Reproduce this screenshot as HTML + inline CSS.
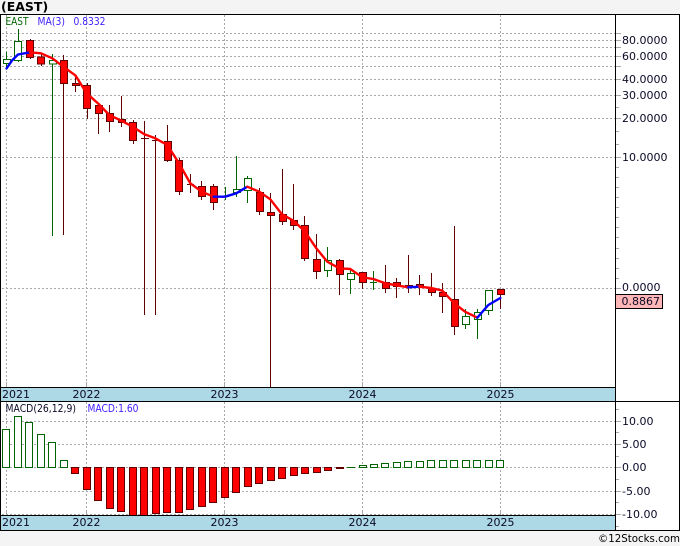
<!DOCTYPE html>
<html><head><meta charset="utf-8"><style>
html,body{margin:0;padding:0;background:#f4f4f4}
svg{display:block}
text{font-family:"DejaVu Sans",sans-serif;font-size:11px;fill:#0a0a28}
.c{shape-rendering:crispEdges}
.r rect{fill:#f00;stroke:#600000}.g rect{fill:#fff;stroke:#006400}
.r path{stroke:#600000;fill:none}.g path{stroke:#006400;fill:none}
</style></head><body>
<svg width="680" height="546" viewBox="0 0 680 546" xmlns="http://www.w3.org/2000/svg">
<rect width="680" height="546" fill="#f4f4f4"/>
<rect x="0" y="14" width="680" height="516" fill="#fff"/>
<g class="c" stroke="#a8a8a8" stroke-dasharray="2 2" fill="none">
<path d="M2 33.5H616M2 40.5H616M2 47.5H616M2 56.5H616M2 66.5H616M2 79.5H616M2 95.5H616M2 118.5H616M2 157.5H616M2 288.5H616"/>
<path d="M2 421.5H616M2 444.5H616M2 467.5H616M2 491.5H616M2 514.5H616"/>
<path d="M6.5 15V387M86.5 15V387M224.5 15V387M362.5 15V387M500.5 15V387M6.5 402V515M86.5 402V515M224.5 402V515M362.5 402V515M500.5 402V515"/>
</g>
<g class="c" stroke="#a8a8a8" fill="none">
<path d="M6.5 382V387M86.5 382V387M224.5 382V387M362.5 382V387M500.5 382V387M6.5 510V515M86.5 510V515M224.5 510V515M362.5 510V515M500.5 510V515"/>
<path d="M616 33.5H621M616 40.5H621M616 47.5H621M616 56.5H621M616 66.5H621M616 79.5H621M616 95.5H621M616 118.5H621M616 157.5H621M616 288.5H621"/>
<path d="M616 107.5H619M616 131.5H619M616 144.5H619M616 167.5H619M616 177.5H619M616 187.5H619M616 197.5H619M616 207.5H619M616 217.5H619M616 227.5H619M616 237.5H619M616 248.5H619M616 258.5H619M616 268.5H619M616 278.5H619"/>
<path d="M616 409.5H619M616 432.5H619M616 456.5H619M616 479.5H619M616 502.5H619M616 526.5H619"/>
<path d="M616 421.5H621M616 444.5H621M616 467.5H621M616 491.5H621M616 514.5H621"/>
</g>
<rect class="c" x="1" y="388" width="614" height="13" fill="#add8e6"/>
<rect class="c" x="1" y="516" width="614" height="14" fill="#add8e6"/>

<g class="c">
<g class="g">
<path d="M6.5 52V68"/><rect x="3.5" y="59.5" width="7" height="4"/>
<path d="M18.5 29V62"/><rect x="14.5" y="41.5" width="7" height="19"/>
<path d="M52.5 54V236"/><rect x="49.5" y="60.5" width="7" height="3.5"/>
<path d="M225.5 187V200M221 196.5H229"/>
<path d="M236.5 156V197"/><rect x="233.5" y="189.5" width="7" height="3"/>
<path d="M247.5 176V203"/><rect x="244.5" y="178.5" width="7" height="12"/>
<path d="M327.5 247V277"/><rect x="324.5" y="260.5" width="7" height="10"/>
<path d="M350.5 270V294"/><rect x="347.5" y="273.5" width="7" height="6"/>
<path d="M373.5 271V290M370 282.5H377"/>
<path d="M465.5 309V329"/><rect x="462.5" y="316.5" width="7" height="8"/>
<path d="M477.5 309V339"/><rect x="474.5" y="312.5" width="7" height="7"/>
<path d="M488.5 290V315"/><rect x="485.5" y="290.5" width="7" height="20"/>
</g>
<g class="r">
<path d="M30.5 39V59"/><rect x="26.5" y="40.5" width="7" height="17"/>
<path d="M41.5 54V66"/><rect x="37.5" y="57" width="7" height="7"/>
<path d="M63.5 55V235"/><rect x="60.5" y="60.5" width="7" height="23"/>
<path d="M75.5 75V92"/><rect x="72.5" y="83.5" width="7" height="2"/>
<path d="M87.5 83V119"/><rect x="83.5" y="85.5" width="7" height="23"/>
<path d="M98.5 105V134"/><rect x="95.5" y="105.5" width="7" height="8"/>
<path d="M109.5 105V132"/><rect x="106.5" y="113.5" width="7" height="8"/>
<path d="M121.5 96V127"/><rect x="118.5" y="119.5" width="7" height="3"/>
<path d="M133.5 120V144"/><rect x="129.5" y="122.5" width="7" height="18"/>
<path d="M144.5 121V315M141 138.5H149"/>
<path d="M155.5 135V315M152 140.5H159"/>
<path d="M167.5 125V162"/><rect x="164.5" y="141.5" width="7" height="19"/>
<path d="M179.5 158V195"/><rect x="175.5" y="160.5" width="7" height="31"/>
<path d="M190.5 174V193M187 184.5H194"/>
<path d="M201.5 181V200"/><rect x="198.5" y="186.5" width="7" height="10"/>
<path d="M213.5 184V210"/><rect x="210.5" y="186.5" width="7" height="16"/>
<path d="M259.5 188V215"/><rect x="256.5" y="192.5" width="7" height="19"/>
<path d="M270.5 193V387"/><rect x="267.5" y="212.5" width="7" height="3"/>
<path d="M282.5 169V225"/><rect x="279.5" y="214.5" width="7" height="7"/>
<path d="M293.5 184V230"/><rect x="290.5" y="220.5" width="7" height="5"/>
<path d="M304.5 216V261"/><rect x="301.5" y="225.5" width="7" height="33"/>
<path d="M316.5 234V279"/><rect x="313.5" y="259.5" width="7" height="12"/>
<path d="M339.5 259V295"/><rect x="336.5" y="260.5" width="7" height="14"/>
<path d="M362.5 272V289"/><rect x="359.5" y="272.5" width="7" height="10"/>
<path d="M385.5 265V293"/><rect x="382.5" y="282.5" width="7" height="6"/>
<path d="M396.5 278V298"/><rect x="393.5" y="282.5" width="7" height="4"/>
<path d="M408.5 255V293"/><rect x="405.5" y="285.5" width="7" height="2"/>
<path d="M419.5 275V295"/><rect x="416.5" y="284.5" width="7" height="2"/>
<path d="M431.5 273V296"/><rect x="428.5" y="288.5" width="7" height="4"/>
<path d="M442.5 283V313"/><rect x="439.5" y="292.5" width="7" height="4"/>
<path d="M454.5 226V335"/><rect x="451.5" y="299.5" width="7" height="27"/>
<path d="M500.5 289V309"/><rect x="497.5" y="289.5" width="7" height="5"/>
</g>
</g>

<g fill="none" stroke-width="2.4" stroke-linejoin="round" stroke-linecap="round">
<polyline stroke="#00f" points="6.5,68.5 12,60.5 18,54.5 30,52.3"/>
<polyline stroke="#f00" points="30,52.3 41,53.3 52.3,58.3 63.3,66.7 75.3,75.3 86.7,93.3 98.7,104 109.3,115 121.3,120.7 132.7,126.7 144.3,134.3 155.3,138.3 167.3,145 179,163.3 190.3,183.3 201.7,191.7 213.7,196.7"/>
<polyline stroke="#00f" points="213.7,196.7 225,196.7 236.3,193.3 247.3,186.7"/>
<polyline stroke="#f00" points="247.3,186.7 259.3,191.7 270.3,199.3 281.7,214 293.3,220.7 304.3,230.7 316.3,248.3 327.3,261.7 339.3,268.3 350.3,269 362.3,277.3 373.3,279 385.3,283.3 396.3,285.3 408.3,287.3"/>
<polyline stroke="#00f" points="408.3,287.3 419.3,286.7"/>
<polyline stroke="#f00" points="419.3,286.7 431.3,288 442.3,290.7 454.3,303.3 465,311.7 477.3,317.7"/>
<polyline stroke="#00f" points="477.3,317.7 488.3,305 500.3,298"/>
</g>

<g class="c">
<g class="g">
<rect x="2.5" y="429.5" width="7" height="38"/><rect x="14.5" y="416.5" width="7" height="51"/><rect x="25.5" y="422.5" width="7" height="45"/><rect x="37.5" y="434.5" width="7" height="33"/><rect x="48.5" y="442.5" width="7" height="25"/><rect x="60.5" y="460.5" width="7" height="7"/>
<path d="M347 467.5H355"/>
<rect x="359.5" y="465.5" width="7" height="2"/><rect x="370.5" y="464.5" width="7" height="3"/><rect x="381.5" y="463.5" width="7" height="4"/><rect x="393.5" y="462.5" width="7" height="5"/><rect x="404.5" y="461.5" width="7" height="6"/><rect x="416.5" y="461.5" width="7" height="6"/><rect x="427.5" y="460.5" width="7" height="7"/><rect x="439.5" y="460.5" width="7" height="7"/><rect x="450.5" y="460.5" width="7" height="7"/><rect x="462.5" y="460.5" width="7" height="7"/><rect x="473.5" y="460.5" width="7" height="7"/><rect x="485.5" y="460.5" width="7" height="7"/><rect x="496.5" y="460.5" width="7" height="7"/>
</g>
<g class="r">
<rect x="71.5" y="467.5" width="7" height="6"/><rect x="83.5" y="467.5" width="7" height="22"/><rect x="94.5" y="467.5" width="7" height="33"/><rect x="106.5" y="467.5" width="7" height="41"/><rect x="117.5" y="467.5" width="7" height="44"/><rect x="129.5" y="467.5" width="7" height="48"/><rect x="140.5" y="467.5" width="7" height="48"/><rect x="152.5" y="467.5" width="7" height="46"/><rect x="163.5" y="467.5" width="7" height="45"/><rect x="175.5" y="467.5" width="7" height="45"/><rect x="186.5" y="467.5" width="7" height="42"/><rect x="198.5" y="467.5" width="7" height="39"/><rect x="209.5" y="467.5" width="7" height="35"/><rect x="221.5" y="467.5" width="7" height="30"/><rect x="232.5" y="467.5" width="7" height="25"/><rect x="244.5" y="467.5" width="7" height="19"/><rect x="255.5" y="467.5" width="7" height="16"/><rect x="267.5" y="467.5" width="7" height="13"/><rect x="278.5" y="467.5" width="7" height="11"/><rect x="290.5" y="467.5" width="7" height="8"/><rect x="301.5" y="467.5" width="7" height="6"/><rect x="313.5" y="467.5" width="7" height="5"/><rect x="324.5" y="467.5" width="7" height="3"/><rect x="336.5" y="467.5" width="7" height="1"/>
</g>
</g>

<g class="c" fill="#000">
<rect x="0" y="14" width="680" height="1"/>
<rect x="0" y="14" width="1" height="516"/>
<rect x="615" y="14" width="1" height="516"/>
<rect x="679" y="14" width="1" height="516"/>
<rect x="0" y="387" width="616" height="1"/>
<rect x="0" y="401" width="680" height="1"/>
<rect x="0" y="515" width="616" height="1"/>
<rect x="0" y="530" width="680" height="1"/>
</g>

<rect class="c" x="615.5" y="294.5" width="47" height="14" fill="#ffb6b6" stroke="#000"/>

<text x="1" y="11" style="font-weight:bold;font-size:12.5px;fill:#000">(EAST)</text>
<text x="5.5" y="25" textLength="23" lengthAdjust="spacingAndGlyphs" style="font-size:11px;fill:#006400">EAST</text>
<text x="37.5" y="25" textLength="27.5" lengthAdjust="spacingAndGlyphs" style="font-size:11px;fill:#4020ff">MA(3)</text>
<text x="73.5" y="25" textLength="32" lengthAdjust="spacingAndGlyphs" style="font-size:11px;fill:#4020ff">0.8332</text>
<text x="5.5" y="412" textLength="70.5" lengthAdjust="spacingAndGlyphs" style="font-size:11px">MACD(26,12,9)</text>
<text x="87.5" y="412" textLength="51" lengthAdjust="spacingAndGlyphs" style="font-size:11px;fill:#4020ff">MACD:1.60</text>

<text x="622" y="44">80.0000</text>
<text x="622" y="60">60.0000</text>
<text x="622" y="83">40.0000</text>
<text x="622" y="99">30.0000</text>
<text x="622" y="122">20.0000</text>
<text x="622" y="161">10.0000</text>
<text x="622" y="291">0.0000</text>
<text x="621.5" y="305">0.8867</text>
<text x="622" y="425">10.00</text>
<text x="622" y="448">5.00</text>
<text x="622" y="471">0.00</text>
<text x="622" y="495">-5.00</text>
<text x="622" y="518">-10.00</text>

<text x="2" y="398">2021</text><text x="72.5" y="398">2022</text><text x="210.5" y="398">2023</text><text x="348.5" y="398">2024</text><text x="486.5" y="398">2025</text>
<text x="2" y="526">2021</text><text x="72.5" y="526">2022</text><text x="210.5" y="526">2023</text><text x="348.5" y="526">2024</text><text x="486.5" y="526">2025</text>

<text x="598" y="542" textLength="82" lengthAdjust="spacingAndGlyphs" style="fill:#000">©12Stocks.com</text>
</svg>
</body></html>
